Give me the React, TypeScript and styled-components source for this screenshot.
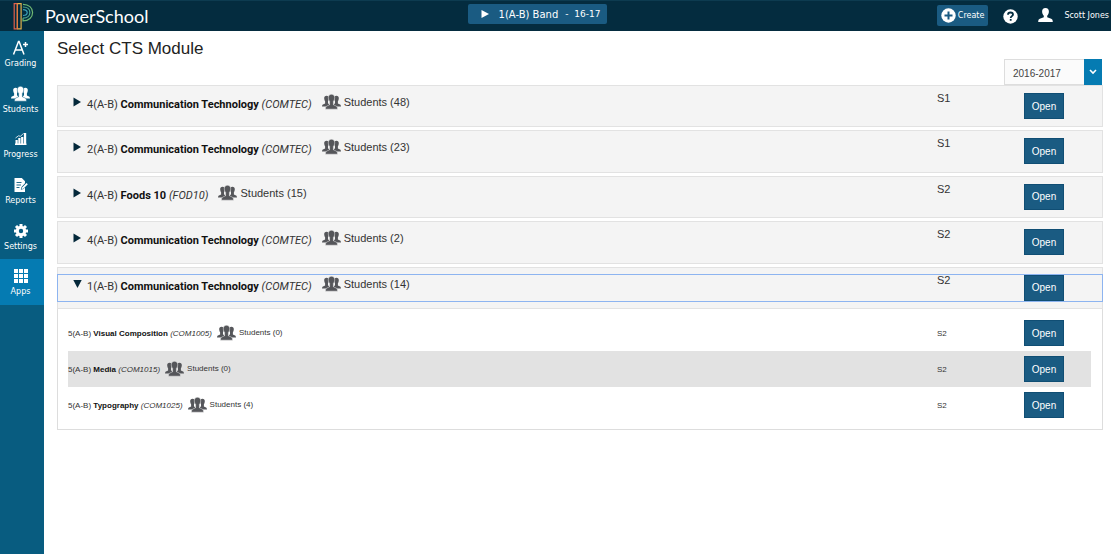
import React, { useState } from "react";
import styled, { createGlobalStyle, css } from "styled-components";

const GlobalStyle = createGlobalStyle`
  * { box-sizing: border-box; }
  body {
    margin: 0;
    background: #fff;
    color: #333;
    font-family: "Liberation Sans", Arial, sans-serif;
  }
  button, select { font-family: inherit; margin: 0; }
  button { cursor: pointer; }
`;

const uiFont = css`
  font-family: "DejaVu Sans", Verdana, sans-serif;
`;

const Page = styled.div`
  min-height: 100vh;
  display: flex;
  flex-direction: column;
`;

const Header = styled.header`
  ${uiFont}
  display: grid;
  grid-template-columns: 1fr auto 1fr;
  align-items: start;
  height: 31px;
  background: #042c3f;
  border-top: 1px solid #0d3b50;
  color: #fff;
`;

const Brand = styled.a`
  display: flex;
  align-items: center;
  gap: 10px;
  height: 30px;
  padding-left: 13px;
  color: #fff;
  text-decoration: none;
  font: 400 18px/30px Lato, sans-serif;
`;

const ClassPicker = styled.button`
  ${uiFont}
  display: flex;
  align-items: center;
  height: 20px;
  margin: 3px 36px 0 0;
  padding: 0 7px 0 13px;
  border: 0;
  border-radius: 2px;
  background: #1a5b82;
  color: #fff;
  font-size: 10px;
  svg { margin-right: 10px; }
`;

const Term = styled.span`
  margin-left: 7px;
  font-size: 9px;
  white-space: pre;
`;

const HeaderTools = styled.div`
  display: flex;
  align-items: center;
  justify-content: flex-end;
  height: 28px;
  padding-right: 2px;
  font-size: 8px;
`;

const CreateButton = styled.button`
  ${uiFont}
  display: flex;
  align-items: center;
  gap: 2px;
  height: 21px;
  margin-right: 15px;
  padding: 0 4px;
  border: 0;
  border-radius: 2px;
  background: #1a5b82;
  color: #fff;
  font-size: 8px;
`;

const IconButton = styled.button`
  display: flex;
  padding: 0;
  border: 0;
  background: none;
  color: #fff;
  margin: 3px 20px 0 0;
`;

const UserLink = styled.a`
  display: flex;
  align-items: center;
  gap: 11px;
  color: #fff;
  text-decoration: none;
`;

const Body = styled.div`
  flex: 1;
  display: flex;
`;

const Sidebar = styled.nav`
  ${uiFont}
  flex: none;
  width: 44px;
  background: #085c80;
`;

const NavList = styled.div`
  display: grid;
  grid-template-rows: repeat(6, 1fr);
  height: 274px;
`;

const NavItem = styled.a<{ $active?: boolean }>`
  display: flex;
  flex-direction: column;
  align-items: center;
  gap: 1px;
  padding: 8px 3px 0 0;
  background: ${(p) => (p.$active ? "#057bb2" : "transparent")};
  color: #fff;
  font-size: 8px;
  line-height: 12px;
  text-decoration: none;
  svg { height: 18px; }
`;

const Main = styled.main`
  flex: 1;
  padding: 7px 8px 24px 13px;
`;

const Title = styled.h1`
  margin: 0;
  color: #222;
  font-size: 17px;
  font-weight: 400;
  line-height: 21px;
`;

const YearBar = styled.div`
  display: flex;
  justify-content: flex-end;
  padding-right: 1px;
`;

const YearField = styled.div`
  display: flex;
  position: relative;
  width: 98px;
  height: 26px;
`;

const YearSelect = styled.select`
  appearance: none;
  flex: 1;
  padding: 2px 8px 0;
  border: 1px solid #ddd;
  border-radius: 0;
  background: #fbfbfb;
  color: #444;
  font-size: 10px;
`;

const YearArrow = styled.span`
  position: absolute;
  inset: 0 0 0 auto;
  width: 18px;
  display: flex;
  align-items: center;
  justify-content: center;
  background: #057bb2;
  pointer-events: none;
`;

const ModuleList = styled.div`
  display: grid;
  grid-auto-rows: 1fr;
  gap: 3px;
  height: 224px;
`;

const ModulePanel = styled.section`
  padding: 6px 0;
  border: 1px solid #e2e2e2;
  background: #f4f4f4;
`;

const ModuleBar = styled.div<{ $focused: boolean }>`
  display: grid;
  grid-template-columns: 1fr 87px 79px;
  align-items: start;
  height: 28px;
  margin: 0 -1px;
  font-size: 11px;
  ${(p) => p.$focused && "outline: 1px solid #8db4f0; outline-offset: -1px;"}
`;

const Summary = styled.div<{ $centered?: boolean }>`
  display: flex;
  align-items: ${(p) => (p.$centered ? "center" : "flex-start")};
`;

const Toggle = styled.button`
  display: flex;
  align-items: flex-start;
  padding: 5px 0 0 16px;
  border: 0;
  background: none;
  color: #333;
  font-family: Roboto, sans-serif;
  font-size: 11px;
  line-height: 16px;
  white-space: nowrap;
  outline: none;
  svg { margin-right: 5px; }
  b { color: #111; }
`;

const Students = styled.span<{ $small?: boolean }>`
  display: flex;
  align-items: center;
  gap: 3px;
  margin-left: ${(p) => (p.$small ? 5 : 10)}px;
  padding-top: ${(p) => (p.$small ? 0 : 1)}px;
  line-height: 18px;
`;

const ModuleTerm = styled.span`
  line-height: 12px;
`;

const OpenButton = styled.button`
  width: 40px;
  height: 26px;
  padding: 0;
  border: 1px solid #104e74;
  background: #1a5b82;
  color: #fff;
  font-size: 10px;
  vertical-align: top;
`;

const BarAction = styled.div`
  padding-top: 1px;
`;

const SubPanel = styled.div`
  padding: 6px 11px 6px 10px;
  border: 1px solid #ddd;
  border-top: 0;
`;

const SubTable = styled.table`
  width: 100%;
  table-layout: fixed;
  border-collapse: collapse;
  font-size: 8px;
  td { height: 36px; padding: 0; }
  tr:nth-child(even) { background: #e2e2e2; }
  b { color: #111; }
`;

const TermCol = styled.col`
  width: 87px;
`;

const ActionCol = styled.col`
  width: 67px;
`;

const GroupIcon = ({ fill = "#55565a" }: { fill?: string }) => (
  <svg width="19" height="16" viewBox="0 0 19 16" fill={fill} aria-hidden="true">
    <path d="M4.600 1.800c1.600 0 2.400 1.100 2.300 2.700-.1 1.300-.5 2-.9 2.700v2.300l1.100.4v2.600H0c.1-1.400.5-1.900 1.500-2.300l1.600-.7V7.200c-.5-.7-.8-1.400-.9-2.700-.1-1.600.8-2.700 2.400-2.700z" />
    <path d="M14.400 1.800c-1.600 0-2.400 1.100-2.300 2.700.1 1.300.5 2 .9 2.700v2.300l-1.100.4v2.600H19c-.1-1.400-.5-1.900-1.500-2.300l-1.600-.7V7.200c.5-.7.8-1.400.9-2.700.1-1.600-.8-2.700-2.400-2.700z" />
    <path
      d="M9.500.3c2.100 0 3.300 1.400 3.200 3.500-.1 1.700-.6 2.800-1.300 3.600v3.400l2.300 1c1.300.5 1.800 1.300 1.900 3.400H3.400c.1-2.100.6-2.900 1.900-3.400l2.300-1V7.400C6.900 6.600 6.400 5.500 6.300 3.800 6.200 1.700 7.400.3 9.500.3z"
      stroke={fill === "#fff" ? "#085c80" : "#f1f1f1"}
      strokeWidth=".5"
    />
  </svg>
);

const LogoMark = () => (
  <svg width="22" height="28" viewBox="0 0 22 28" fill="none" strokeWidth="1.200" aria-hidden="true">
    <path d="M4.300 1.600H1.200v25.300h3.100z" stroke="#e0604c" />
    <path d="M4.300 1.600h3.800v25.300H4.300" stroke="#e2b04a" />
    <path d="M4.300 2v24.500" stroke="#e2803f" />
    <path d="M10 2.300c5.800 0 9.600 3.500 9.600 8.300s-3.800 8.300-9.600 8.300v-2.700" stroke="#6fb873" />
    <path d="M10 5c4.200 0 6.900 2.300 6.900 5.600s-2.700 5.600-6.900 5.600" stroke="#4aa98e" />
    <path d="M10 7.700c2.600 0 4.200 1.100 4.200 2.900s-1.600 2.900-4.200 2.900" stroke="#3a9fb8" />
  </svg>
);

const NavIcon = ({ name }: { name: string }) => {
  switch (name) {
    case "Grading":
      return (
        <svg width="18" height="18" viewBox="0 0 18 18" fill="none" stroke="#fff" strokeWidth="1.500" aria-hidden="true">
          <path d="M1.500 15.500 6.500 2.500h.6l4.900 13M3.200 11h7.200M11 5.500h5M13.500 3v5" />
        </svg>
      );
    case "Students":
      return <GroupIcon fill="#fff" />;
    case "Progress":
      return (
        <svg width="14" height="18" viewBox="0 0 14 18" fill="#fff" aria-hidden="true">
          <path d="M1.500 10h2.200v3.500H1.500zM4.300 8h2.200v5.500H4.300zM7.100 7h2.200v6.500H7.100zM9.900 3h2.300v10.500H9.900zM1 13.500h11.500V15H1z" />
          <path d="M1.500 8 4.500 5.800l2 .5 3-3" fill="none" stroke="#fff" strokeWidth=".8" />
        </svg>
      );
    case "Reports":
      return (
        <svg width="16" height="18" viewBox="0 0 16 18" fill="#fff" aria-hidden="true">
          <path d="M1.500 2h7.300L12 5.200v2L8.500 11l-.7 2.700 2.700-.7L12 11.500V16H1.500z" />
          <path d="M3.500 6.500h5M3.500 9h4.500M3.500 11.500h3" stroke="#085c80" strokeWidth=".9" />
          <path d="m13.500 7 1.300 1.300-4.500 4.400-1.700.4.400-1.700z" />
        </svg>
      );
    case "Settings":
      return (
        <svg width="16" height="18" viewBox="0 0 16 18" aria-hidden="true">
          <path d="M8 2v14M1 9h14M3 4l10 10M13 4 3 14" stroke="#fff" strokeWidth="3" />
          <circle cx="8" cy="9" r="3.700" fill="#085c80" stroke="#fff" strokeWidth="3" />
        </svg>
      );
    default:
      return (
        <svg width="14" height="18" viewBox="0 0 14 18" fill="#fff" aria-hidden="true">
          {[2, 7, 12].map((y) => [0, 5, 10].map((x) => <rect key={`${x}-${y}`} x={x} y={y} width="4" height="4" />))}
        </svg>
      );
  }
};

const Triangle = ({ open }: { open: boolean }) => (
  <svg width="9" height="10" viewBox="0 0 9 10" fill="#04283a" aria-hidden="true">
    <path d={open ? "M.3 1h8.400L4.500 9z" : "M.5.500 8 5 .500 9.500z"} />
  </svg>
);

type Module = { period: string; name: string; code: string; count: number; term: string };

const modules: Module[] = [
  { period: "4(A-B)", name: "Communication Technology", code: "COMTEC", count: 48, term: "S1" },
  { period: "2(A-B)", name: "Communication Technology", code: "COMTEC", count: 23, term: "S1" },
  { period: "4(A-B)", name: "Foods 10", code: "FOD10", count: 15, term: "S2" },
  { period: "4(A-B)", name: "Communication Technology", code: "COMTEC", count: 2, term: "S2" },
  { period: "1(A-B)", name: "Communication Technology", code: "COMTEC", count: 14, term: "S2" },
];

const subModules: Module[] = [
  { period: "5(A-B)", name: "Visual Composition", code: "COM1005", count: 0, term: "S2" },
  { period: "5(A-B)", name: "Media", code: "COM1015", count: 0, term: "S2" },
  { period: "5(A-B)", name: "Typography", code: "COM1025", count: 4, term: "S2" },
];

const navItems = ["Grading", "Students", "Progress", "Reports", "Settings", "Apps"];

const ModuleName = ({ module }: { module: Module }) => (
  <span>
    {module.period} <b>{module.name}</b> <i>({module.code})</i>
  </span>
);

export default function App() {
  const [openIndex, setOpenIndex] = useState(4);

  return (
    <Page>
      <GlobalStyle />
      <Header>
        <Brand href="#">
          <LogoMark />
          PowerSchool
        </Brand>
        <ClassPicker>
          <svg width="8" height="8" viewBox="0 0 8 8" fill="#fff" aria-hidden="true">
            <path d="M.5 0 8 4 .5 8z" />
          </svg>
          1(A-B) Band
          <Term>-  16-17</Term>
        </ClassPicker>
        <HeaderTools>
          <CreateButton>
            <svg width="15" height="15" viewBox="0 0 15 15" aria-hidden="true">
              <circle cx="7.500" cy="7.500" r="7.200" fill="#fff" />
              <path d="M7.500 3.500v8M3.500 7.500h8" stroke="#1a5b82" strokeWidth="2" />
            </svg>
            Create
          </CreateButton>
          <IconButton aria-label="Help">
            <svg width="15" height="15" viewBox="0 0 15 15" fill="none" aria-hidden="true">
              <circle cx="7.500" cy="7.500" r="7.200" fill="#fff" />
              <path d="M5 5.800C5 4.300 6 3.500 7.500 3.500S10 4.300 10 5.600c0 1.500-2.300 1.600-2.300 3.400M7.700 10v1.800" stroke="#042c3f" strokeWidth="1.800" />
            </svg>
          </IconButton>
          <UserLink href="#">
            <svg width="15" height="14" viewBox="0 0 15 14" fill="#fff" aria-hidden="true">
              <path d="M7.500 0c2.300 0 3.500 1.500 3.400 3.700-.1 1.900-.8 3.100-1.700 4v1.500l4 1.500c1.200.5 1.500 1.300 1.600 3.300H.2c.1-2 .4-2.800 1.600-3.300l4-1.500V7.700c-.9-.9-1.600-2.100-1.700-4C4 1.500 5.200 0 7.500 0z" />
            </svg>
            Scott Jones
          </UserLink>
        </HeaderTools>
      </Header>
      <Body>
        <Sidebar>
          <NavList>
            {navItems.map((name) => (
              <NavItem key={name} href="#" $active={name === "Apps"}>
                <NavIcon name={name} />
                {name}
              </NavItem>
            ))}
          </NavList>
        </Sidebar>
        <Main>
          <Title>Select CTS Module</Title>
          <YearBar>
            <YearField>
              <YearSelect aria-label="School year" defaultValue="2016-2017">
                <option>2016-2017</option>
                <option>2015-2016</option>
              </YearSelect>
              <YearArrow>
                <svg width="8" height="6" viewBox="0 0 8 6" fill="none" stroke="#fff" strokeWidth="1.600" aria-hidden="true">
                  <path d="m1 1 3 3 3-3" />
                </svg>
              </YearArrow>
            </YearField>
          </YearBar>
          <ModuleList>
            {modules.map((module, index) => {
              const open = index === openIndex;
              return (
                <ModulePanel key={index}>
                  <ModuleBar $focused={open}>
                    <Summary>
                      <Toggle aria-expanded={open} onClick={() => setOpenIndex(open ? -1 : index)}>
                        <Triangle open={open} />
                        <ModuleName module={module} />
                      </Toggle>
                      <Students>
                        <GroupIcon />
                        Students ({module.count})
                      </Students>
                    </Summary>
                    <ModuleTerm>{module.term}</ModuleTerm>
                    <BarAction>
                      <OpenButton>Open</OpenButton>
                    </BarAction>
                  </ModuleBar>
                </ModulePanel>
              );
            })}
          </ModuleList>
          {openIndex === 4 && (
            <SubPanel>
              <SubTable>
                <colgroup>
                  <col />
                  <TermCol />
                  <ActionCol />
                </colgroup>
                <tbody>
                  {subModules.map((module) => (
                    <tr key={module.code}>
                      <td>
                        <Summary $centered>
                          <ModuleName module={module} />
                          <Students $small>
                            <GroupIcon />
                            Students ({module.count})
                          </Students>
                        </Summary>
                      </td>
                      <td>{module.term}</td>
                      <td>
                        <OpenButton>Open</OpenButton>
                      </td>
                    </tr>
                  ))}
                </tbody>
              </SubTable>
            </SubPanel>
          )}
        </Main>
      </Body>
    </Page>
  );
}
